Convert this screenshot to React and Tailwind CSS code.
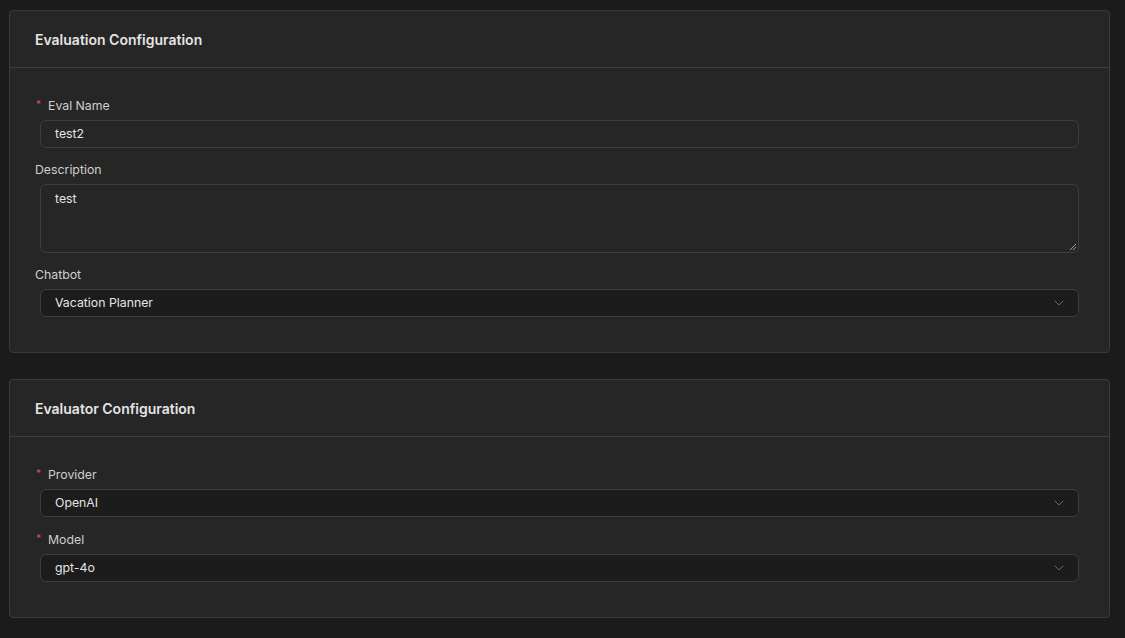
import React from "react";

const Label = ({ children, required }) => (
  <div className="flex h-5 items-center text-[12.3px] text-[#cfcfcf] mb-1">
    {required && <span className="text-[#e5484d] text-[10px] mr-[7px] ml-px -mt-1">*</span>}
    {children}
  </div>
);

const Chevron = () => (
  <svg width="12" height="12" viewBox="0 0 12 12" fill="none" className="text-[#6b6b6b]">
    <path d="M2 4l4 4 4-4" stroke="currentColor" strokeWidth="1" strokeLinecap="round" strokeLinejoin="round" />
  </svg>
);

const Select = ({ value }) => (
  <div className="mx-[5px] h-[28px] flex items-center justify-between rounded-md border border-[#3d3d3d] bg-[#1c1c1c] pl-[14px] pr-[13px] text-[12.3px] text-[#e4e4e4]">
    <span>{value}</span>
    <Chevron />
  </div>
);

const Card = ({ title, children }) => (
  <section className="rounded border border-[#3a3a3a] bg-[#262626]">
    <div className="h-[57px] flex items-center px-[25px] border-b border-[#3d3d3d]">
      <h2 className="text-[14px] font-semibold text-[#e4e4e4]">{title}</h2>
    </div>
    <div className="px-[25px] pt-[28px] pb-[35px]">{children}</div>
  </section>
);

export default function App() {
  return (
    <div
      className="min-h-screen bg-[#1b1b1b] pl-[9px] pr-[15px] pt-[10px] pb-5 flex flex-col gap-[26px]"
      style={{ fontFamily: "Inter, 'Noto Sans', sans-serif" }}
    >
      <Card title="Evaluation Configuration">
        <Label required>Eval Name</Label>
        <div className="mx-[5px] h-[28px] flex items-center rounded-md border border-[#3d3d3d] bg-[#262626] px-[14px] text-[12.3px] text-[#e4e4e4]">
          test2
        </div>
        <div className="mt-3">
          <Label>Description</Label>
          <div className="relative mx-[5px] h-[69px] rounded-md border border-[#3d3d3d] bg-[#262626] px-[14px] pt-[5px] text-[12.3px] text-[#e4e4e4]">
            test
            <svg width="9" height="9" viewBox="0 0 9 9" className="absolute right-[1px] bottom-[1px]">
              <path d="M8 2L2 8M8 5L5 8" stroke="#9a9a9a" strokeWidth="1" />
            </svg>
          </div>
        </div>
        <div className="mt-3">
          <Label>Chatbot</Label>
          <Select value="Vacation Planner" />
        </div>
      </Card>
      <Card title="Evaluator Configuration">
        <Label required>Provider</Label>
        <Select value="OpenAI" />
        <div className="mt-[13px]">
          <Label required>Model</Label>
          <Select value="gpt-4o" />
        </div>
      </Card>
    </div>
  );
}
